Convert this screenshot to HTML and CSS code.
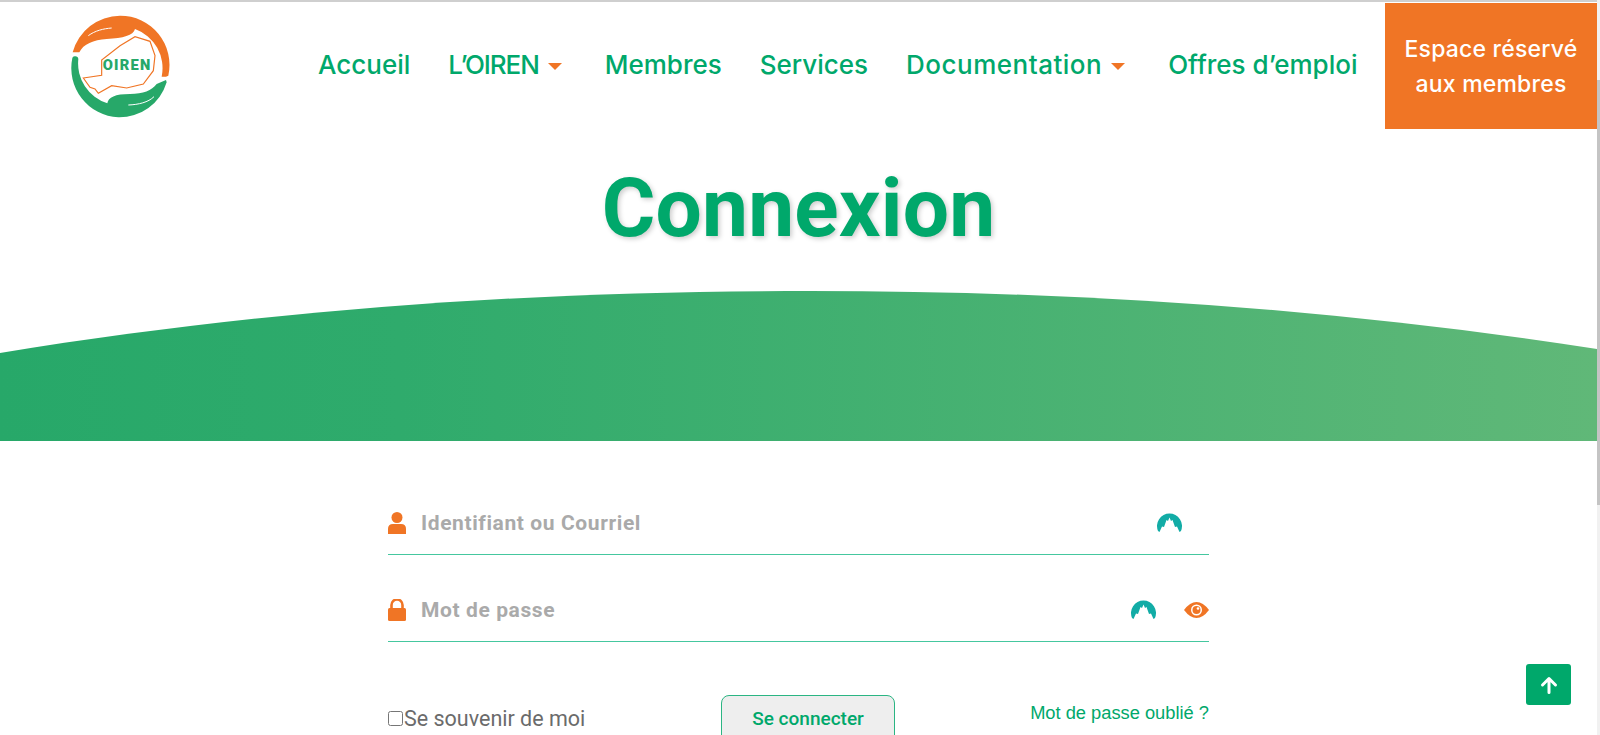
FILE: index.html
```html
<!DOCTYPE html>
<html lang="fr">
<head>
    <meta charset="UTF-8">
    <title>Connexion - OIREN</title>
    <link rel="stylesheet" href="styles.css">
</head>
<body>
    <div class="page">
        <header class="navbar">
            <a href="#" class="logo">
                <svg viewBox="90 40 300 315" width="100" height="105">
                    <path d="M98 155 A148 148 0 0 1 240 45 A148 148 0 0 1 385 225 L378 228 L365 228 A125 125 0 0 0 285 85 C280 105 250 112 200 115 C160 118 130 130 118 155 Z" fill="#f07525"/>
                    <path d="M145 105 C165 90 190 84 215 82" fill="none" stroke="#fff" stroke-width="3"/>
                    <path d="M97 172 Q98 166 106 167 Q114 167 115 175 A125 125 0 0 0 202 308 C205 290 225 280 270 280 C310 280 335 270 350 250 L378 238 L380 245 A148 148 0 0 1 235 350 A148 148 0 0 1 97 172 Z" fill="#27a869"/>
                    <path d="M265 313 C295 312 325 305 342 288" fill="none" stroke="#fff" stroke-width="3"/>
                    <path d="M130 232 L185 224 L185 178 L240 135 L285 108 L330 122 L345 165 L340 210 L310 250 L260 262 L215 255 L175 278 L165 265 L150 260 Z" fill="none" stroke="#f07525" stroke-width="3.500"/>
                    <text x="188" y="209" class="logo-text" textLength="143">OIREN</text>
                </svg>
            </a>
            <nav class="nav-links">
                <a href="#">Accueil</a>
                <a href="#" class="has-arrow nav-tight">L’OIREN</a>
                <a href="#">Membres</a>
                <a href="#">Services</a>
                <a href="#" class="has-arrow nav-wide">Documentation</a>
                <a href="#">Offres d’emploi</a>
            </nav>
            <a href="#" class="member-btn">Espace réservé<br>aux membres</a>
        </header>

        <h1 class="page-title">Connexion</h1>

        <svg class="wave" viewBox="0 0 1597 150" preserveAspectRatio="none">
            <defs>
                <linearGradient id="waveGrad" x1="0" y1="0" x2="1" y2="0">
                    <stop offset="0" stop-color="#27a869"/>
                    <stop offset="0.25" stop-color="#2fab6c"/>
                    <stop offset="1" stop-color="#60b878"/>
                </linearGradient>
            </defs>
            <path d="M0 62 C270 18 530 0 810 0 C1080 0 1340 18 1597 58 L1597 150 L0 150 Z" fill="url(#waveGrad)"/>
        </svg>

        <form class="login-form">
            <div class="field">
                <svg class="field-icon" viewBox="0 0 18 22"><circle cx="9" cy="5.500" r="5.500"/><path d="M0 22 V17 Q0 12 5 12 H13 Q18 12 18 17 V22 Z"/></svg>
                <input type="text" placeholder="Identifiant ou Courriel">
                <svg class="vpn-icon" viewBox="0 0 25 20"><path d="M1 19 A12.500 12.500 0 1 1 24 19 L22.500 20 L20 14.500 L18 15 L15.500 8 L14 9 L12.500 5.500 L11 9 L9.500 8 L7 15 L5 14.500 L2.500 20 Z"/></svg>
                <span class="eye-slot"></span>
            </div>
            <div class="field">
                <svg class="field-icon" viewBox="0 0 18 22"><path d="M3.500 10 V6 A5.500 5.500 0 0 1 14.500 6 V10" fill="none" stroke="#f07525" stroke-width="2.600"/><rect y="9" width="18" height="13" rx="1.500"/></svg>
                <input type="password" placeholder="Mot de passe">
                <svg class="vpn-icon" viewBox="0 0 25 20"><path d="M1 19 A12.500 12.500 0 1 1 24 19 L22.500 20 L20 14.500 L18 15 L15.500 8 L14 9 L12.500 5.500 L11 9 L9.500 8 L7 15 L5 14.500 L2.500 20 Z"/></svg>
                <svg class="eye-icon" viewBox="0 0 25 16"><path d="M0 8 Q6 0 12.500 0 Q19 0 25 8 Q19 16 12.500 16 Q6 16 0 8 Z" fill="#f07525"/><circle cx="12.500" cy="8" r="5.500" fill="#fff"/><circle cx="12.500" cy="8" r="4" fill="#f07525"/><circle cx="14" cy="6.500" r="1.300" fill="#fff"/></svg>
            </div>
            <div class="form-bottom">
                <label class="remember"><input type="checkbox">Se souvenir de moi</label>
                <button type="button" class="submit-btn">Se connecter</button>
                <a href="#" class="forgot">Mot de passe oublié ?</a>
            </div>
        </form>
    </div>

    <a href="#" class="back-top">
        <svg viewBox="0 0 18 18" width="18" height="18"><path d="M9 16.500 V2.500 M2.500 9 L9 2.500 L15.500 9" fill="none" stroke="#fff" stroke-width="3" stroke-linecap="round" stroke-linejoin="round"/></svg>
    </a>
    <div class="scroll-thumb"></div>
</body>
</html>
```

FILE: styles.css
```css
html, body {
    margin: 0;
    padding: 0;
    height: 735px;
    overflow: hidden;
    background: #fff;
}
body {
    font-family: Roboto, sans-serif;
}
.page {
    width: 1597px;
    height: 735px;
    overflow: hidden;
    border-top: 2px solid #cfcfcf;
    box-sizing: border-box;
}
.navbar {
    display: flex;
    align-items: flex-start;
    height: 127px;
    padding-left: 70px;
}
.logo {
    display: block;
    margin-top: 12px;
    line-height: 0;
}
.logo-text {
    font-family: Roboto, sans-serif;
    font-weight: 900;
    font-size: 44px;
    fill: #27a869;
}
.nav-links {
    display: flex;
    gap: 38px;
    margin-left: 148px;
    padding-top: 47px;
}
.nav-links a {
    font-family: Inter, sans-serif;
    font-size: 26px;
    font-weight: 500;
    letter-spacing: 0;
    line-height: 32px;
    color: #00a86b;
    text-decoration: none;
}
.nav-links .nav-tight {
    letter-spacing: -1.1px;
}
.nav-links .nav-wide {
    letter-spacing: 0.5px;
}
.has-arrow::after {
    content: "";
    display: inline-block;
    margin-left: 9px;
    margin-right: 5px;
    vertical-align: 4px;
    border-left: 7px solid transparent;
    border-right: 7px solid transparent;
    border-top: 7px solid #f07525;
}
.member-btn {
    width: 212px;
    height: 124px;
    padding-top: 2px;
    margin-left: auto;
    margin-top: 1px;
    background: #f07525;
    color: #fff;
    font-family: Inter, sans-serif;
    font-size: 23px;
    font-weight: 500;
    letter-spacing: 0.2px;
    line-height: 35px;
    text-align: center;
    text-decoration: none;
    display: flex;
    align-items: center;
    justify-content: center;
}
.page-title {
    margin: 32px 0 0;
    height: 130px;
    font-size: 82px;
    line-height: 94px;
    font-weight: 700;
    letter-spacing: 0.2px;
    text-align: center;
    color: #00a86b;
    text-shadow: 2px 2px 5px rgba(0, 0, 0, 0.2);
}
.wave {
    display: block;
    width: 100%;
    height: 150px;
}
.login-form {
    width: 821px;
    margin: 0 0 0 388px;
    padding-top: 51px;
}
.field {
    display: flex;
    align-items: center;
    height: 62px;
    margin-bottom: 24px;
    border-bottom: 1px solid #45c79f;
}
.field-icon {
    width: 18px;
    height: 22px;
    fill: #f07525;
    flex-shrink: 0;
}
.field input {
    flex: 1;
    min-width: 0;
    margin-left: 13px;
    border: none;
    outline: none;
    background: transparent;
    font-family: Roboto, sans-serif;
    font-size: 21px;
    font-weight: 700;
    letter-spacing: 0.6px;
}
.field input::placeholder {
    color: #aaa;
    opacity: 1;
}
.vpn-icon {
    width: 25px;
    height: 20px;
    margin-bottom: 2px;
    fill: #12aca6;
    flex-shrink: 0;
}
.eye-slot {
    width: 0;
    margin-left: 27px;
}
.eye-icon {
    width: 25px;
    height: 16px;
    margin-left: 28px;
    flex-shrink: 0;
}
.form-bottom {
    display: flex;
    align-items: flex-start;
    margin-top: 53px;
}
.remember {
    display: flex;
    align-items: center;
    width: 333px;
    margin-top: 11px;
    font-size: 21.5px;
    color: #6b6b6b;
}
.remember input {
    width: 15px;
    height: 15px;
    margin: 0 1px 0 0;
}
.submit-btn {
    width: 174px;
    height: 50px;
    padding: 0 0 4px;
    background: #eee;
    border: 1px solid #2bb583;
    border-radius: 8px;
    color: #00a86b;
    font-family: Roboto, sans-serif;
    font-size: 19px;
    font-weight: 500;
}
.forgot {
    margin-left: auto;
    margin-top: 7px;
    font-family: "Liberation Sans", sans-serif;
    font-size: 18.3px;
    color: #00a86b;
    text-decoration: none;
}
.back-top {
    position: fixed;
    left: 1526px;
    top: 664px;
    width: 45px;
    height: 41px;
    border-radius: 3px;
    background: #00a86b;
    display: flex;
    align-items: center;
    justify-content: center;
}
.scroll-thumb {
    position: fixed;
    left: 1597px;
    top: 0;
    width: 3px;
    height: 735px;
    background: linear-gradient(#f1f1f1 0, #f1f1f1 80px, #c4c4c4 80px, #c4c4c4 505px, #f1f1f1 505px);
}
```
